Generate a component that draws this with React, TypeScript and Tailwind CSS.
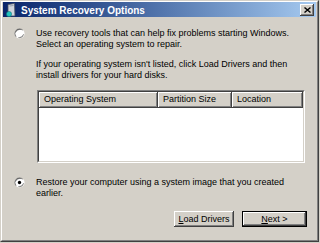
import React from 'react';

const raised =
  'shadow-[inset_-1px_-1px_0_#404040,inset_1px_1px_0_#ffffff,inset_-2px_-2px_0_#808080,inset_2px_2px_0_#d4d0c8]';

const Radio: React.FC<{ checked?: boolean }> = ({ checked }) => (
  <svg width="11" height="11" viewBox="0 0 12 12" className="shrink-0">
    <defs>
      <linearGradient id={checked ? 'rg2' : 'rg1'} x1="0" y1="0" x2="1" y2="1">
        <stop offset="0.45" stopColor="#808080" />
        <stop offset="0.55" stopColor="#ffffff" />
      </linearGradient>
    </defs>
    <circle cx="6" cy="6" r="5.5" fill={`url(#${checked ? 'rg2' : 'rg1'})`} />
    <circle cx="6" cy="6" r="4.5" fill="#ffffff" stroke="#404040" strokeWidth="0.8" strokeDasharray="7 7" strokeDashoffset="-1" />
    {checked && <circle cx="6" cy="6" r="1.8" fill="#000000" />}
  </svg>
);

const HeaderCell: React.FC<{ w: string; label: string }> = ({ w, label }) => (
  <div className={`${w} h-[16px] pl-[5px] pt-[2px] bg-[#d4d0c8] ${raised}`}>{label}</div>
);

export default function App() {
  return (
    <div className="w-[320px] h-[243px] bg-[#d4d0c8] font-['Liberation_Sans',Arial,sans-serif] text-[9px] leading-[11px] text-black">
      <div className="w-[319px] h-[242px] border border-t-[#d4d0c8] border-l-[#d4d0c8] border-r-[#404040] border-b-[#404040]">
        <div className="h-full border border-t-white border-l-white border-r-[#808080] border-b-[#808080] p-[1px] pt-0 flex flex-col">
          {/* title bar */}
          <div className="h-[15px] flex items-center bg-gradient-to-r from-[#0a246a] to-[#a6caf0] pl-[2px] pr-[2px]">
            <svg width="12" height="14" viewBox="0 0 12 14" className="shrink-0">
              <path d="M3 1.5 L9.5 0.5 L10 13 L3 13 Z" fill="#d0d4dc" stroke="#4a5060" strokeWidth="0.8" />
              <path d="M4.5 3 L8.5 2.5" stroke="#8890a0" strokeWidth="0.8" />
              <circle cx="4" cy="11" r="2.6" fill="#22c4c0" stroke="#0a6a70" strokeWidth="0.5" />
            </svg>
            <span className="ml-[4px] text-white font-bold text-[10px] leading-[13px] pt-[2px]">System Recovery Options</span>
            <div className={`ml-auto w-[14px] h-[12px] bg-[#d4d0c8] flex items-center justify-center ${raised}`}>
              <svg width="7" height="6" viewBox="0 0 7 6">
                <path d="M0.5 0.5 L6.5 5.5 M6.5 0.5 L0.5 5.5" stroke="#000" strokeWidth="1.4" />
              </svg>
            </div>
          </div>

          {/* content */}
          <div className="flex-1 pl-[11px] pt-[11px] pr-[9px] flex flex-col">
            <div className="flex items-start">
              <Radio />
              <div className="ml-[11px]">
                <p>
                  Use recovery tools that can help fix problems starting Windows.
                  <br />
                  Select an operating system to repair.
                </p>
                <p className="mt-[9px]">
                  If your operating system isn't listed, click Load Drivers and then
                  <br />
                  install drivers for your hard disks.
                </p>
                <div className="mt-[9px] ml-[1px] w-[268px] h-[73px] border border-t-[#808080] border-l-[#808080] border-r-white border-b-white">
                  <div className="h-full border border-t-[#404040] border-l-[#404040] border-r-[#d4d0c8] border-b-[#d4d0c8] bg-white">
                    <div className="flex">
                      <HeaderCell w="w-[119px]" label="Operating System" />
                      <HeaderCell w="w-[74px]" label="Partition Size" />
                      <HeaderCell w="w-[71px]" label="Location" />
                    </div>
                  </div>
                </div>
              </div>
            </div>

            <div className="flex items-start mt-[14px]">
              <Radio checked />
              <p className="ml-[11px]">
                Restore your computer using a system image that you created
                <br />
                earlier.
              </p>
            </div>

            <div className="mt-[12px] flex justify-end gap-[8px]">
              <div className={`w-[60px] h-[16px] bg-[#d4d0c8] flex items-center justify-center ${raised}`}>
                <span>
                  <span className="underline">L</span>oad Drivers
                </span>
              </div>
              <div className="border border-black">
                <div className={`w-[63px] h-[14px] bg-[#d4d0c8] flex items-center justify-center ${raised}`}>
                  <span>
                    <span className="underline">N</span>ext &gt;
                  </span>
                </div>
              </div>
            </div>
          </div>
        </div>
      </div>
    </div>
  );
}
